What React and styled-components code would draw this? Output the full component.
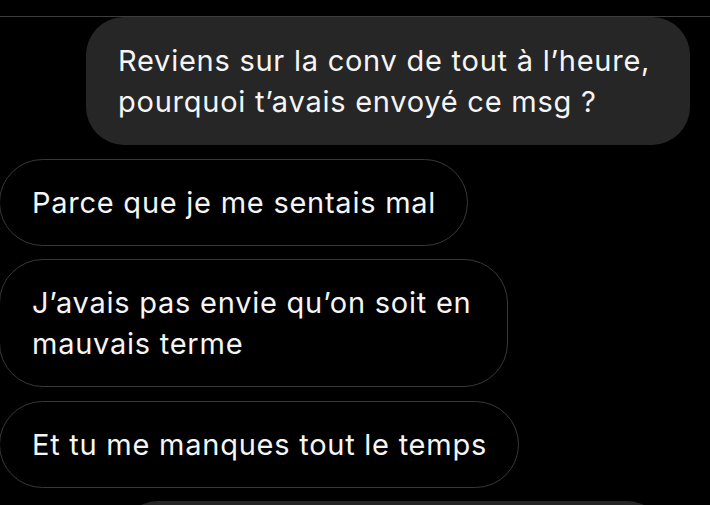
import React from 'react'
import styled, { createGlobalStyle } from 'styled-components'

const GlobalStyle = createGlobalStyle`
  html, body {
    margin: 0;
    padding: 0;
    background: #000;
  }
  body {
    font-family: Inter, "Noto Sans", "Liberation Sans", sans-serif;
    -webkit-font-smoothing: antialiased;
  }
`

const Screen = styled.div`
  width: 710px;
  height: 505px;
  overflow: hidden;
  background: #000;
  display: flex;
  flex-direction: column;
`

const TopBar = styled.div`
  height: 16px;
  flex-shrink: 0;
  border-bottom: 1px solid #3c3c3c;
`

const Thread = styled.div`
  display: flex;
  flex-direction: column;
  gap: 13.5px;
`

const Bubble = styled.div`
  box-sizing: border-box;
  color: #f5f5f5;
  font-size: 29px;
  line-height: 41px;
  letter-spacing: 0.75px;
  padding: 23px 32px;
`

const Sent = styled(Bubble)`
  align-self: flex-end;
  width: ${props => props.width || 'auto'};
  margin-right: ${props => props.right || '20px'};
  background: #262626;
  border-radius: 38px;
`

const Received = styled(Bubble)`
  align-self: flex-start;
  margin-left: -1px;
  padding: 22px 31px 22px 32px;
  border: 1.5px solid #383838;
  border-radius: 44px;
  background: #000;
`

const messages = [
  { from: 'them', text: 'Parce que je me sentais mal' },
  { from: 'them', text: "J’avais pas envie qu’on soit en mauvais terme", width: '509px' },
  { from: 'them', text: 'Et tu me manques tout le temps' },
]

export default function App() {
  return (
    <>
      <GlobalStyle />
      <Screen>
        <TopBar />
        <Thread>
          <Sent width="604px">
            Reviens sur la conv de tout à l’heure, pourquoi t’avais envoyé ce msg ?
          </Sent>
          {messages.map(m => (
            <Received key={m.text} style={m.width ? { width: m.width } : undefined}>
              {m.text}
            </Received>
          ))}
          <Sent width="545px" right="45px">
            &nbsp;
          </Sent>
        </Thread>
      </Screen>
    </>
  )
}
